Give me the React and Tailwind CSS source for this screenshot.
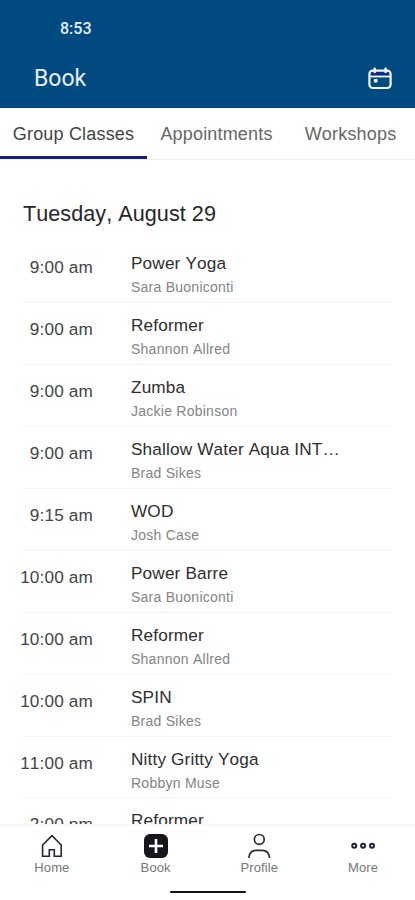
const tabs = [
  { label: "Group Classes", width: "w-[147px]", active: true },
  { label: "Appointments", width: "w-[139px]" },
  { label: "Workshops", width: "w-[129px]" },
];

const classes = [
  { time: "9:00 am", title: "Power Yoga", teacher: "Sara Buoniconti" },
  { time: "9:00 am", title: "Reformer", teacher: "Shannon Allred" },
  { time: "9:00 am", title: "Zumba", teacher: "Jackie Robinson" },
  { time: "9:00 am", title: "Shallow Water Aqua INT…", teacher: "Brad Sikes" },
  { time: "9:15 am", title: "WOD", teacher: "Josh Case" },
  { time: "10:00 am", title: "Power Barre", teacher: "Sara Buoniconti" },
  { time: "10:00 am", title: "Reformer", teacher: "Shannon Allred" },
  { time: "10:00 am", title: "SPIN", teacher: "Brad Sikes" },
  { time: "11:00 am", title: "Nitty Gritty Yoga", teacher: "Robbyn Muse" },
  { time: "2:00 pm", title: "Reformer", teacher: "Shannon Allred" },
];

function CalendarIcon() {
  return (
    <svg width="26" height="24" viewBox="0 0 26 24" fill="none" stroke="#f1f3ff">
      <path d="M4 4.5h17.600v4H4z" fill="#0c2a86" stroke="none" />
      <rect x="2.4" y="3.6" width="21.2" height="17.4" rx="3.4" strokeWidth="2.2" />
      <path d="M2.4 9.5h21.2" strokeWidth="1.8" />
      <path d="M7.7 1.7v3.3M18.6 1.7v3.3" strokeWidth="2.6" strokeLinecap="round" />
      <rect x="6.9" y="12" width="3.6" height="3.6" rx="0.8" fill="#f1f3ff" stroke="none" />
    </svg>
  );
}

function HomeIcon() {
  return (
    <svg width="26" height="26" viewBox="0 0 26 26" fill="none" stroke="#24243c" strokeWidth="1.6">
      <path d="M13 2.6 3.6 12v11.3h6.7v-6.6h5v6.6h6.9V12z" />
    </svg>
  );
}

function BookIcon() {
  return (
    <svg width="26" height="26" viewBox="0 0 26 26">
      <rect x="1" y="1" width="24" height="24" rx="6" fill="#17171b" />
      <path d="M13 6v14M6 13h14" stroke="#fff" strokeWidth="2.6" />
    </svg>
  );
}

function ProfileIcon() {
  return (
    <svg width="26" height="26" viewBox="0 0 26 26" fill="none" stroke="#2c2c38" strokeWidth="1.7">
      <circle cx="13.3" cy="6.4" r="4.9" />
      <path d="M2.7 25c.6-5 3.5-7.7 7.3-7.7h6.4c3.8 0 6.7 2.7 7.3 7.7" />
    </svg>
  );
}

function MoreIcon() {
  return (
    <svg width="26" height="26" viewBox="0 0 26 26" fill="none" stroke="#20203a" strokeWidth="2">
      <circle cx="4.2" cy="12.8" r="2" />
      <circle cx="13.1" cy="12.8" r="2" />
      <circle cx="22" cy="12.8" r="2" />
    </svg>
  );
}

const navItems = [
  { label: "Home", Icon: HomeIcon },
  { label: "Book", Icon: BookIcon },
  { label: "Profile", Icon: ProfileIcon },
  { label: "More", Icon: MoreIcon },
];

function ClassRow({ time, title, teacher }) {
  return (
    <li className="mx-[23px] flex h-[61.93px] shrink-0 border-b border-[#f3f5f6]">
      <div className="-ml-[13px] w-[83px] shrink-0 pt-[15px] text-right text-[17.2px] leading-[22px] tracking-[0.15px] text-[#444]">
        {time}
      </div>
      <div className="ml-[38px] min-w-0 pt-[11px]">
        <div className="whitespace-nowrap text-[17.2px] leading-[22px] tracking-[0.15px] text-[#2e2e2e]">{title}</div>
        <div className="mt-[4px] whitespace-nowrap text-[14px] leading-[18px] tracking-[0.25px] text-[#848484]">
          {teacher}
        </div>
      </div>
    </li>
  );
}

export default function App() {
  return (
    <div className="flex h-[900px] w-[415px] flex-col overflow-hidden bg-white font-['Liberation_Sans',Arial,sans-serif] [font-kerning:none]">
      <header className="flex h-[108px] shrink-0 flex-col border-b border-[#073c83] bg-[#004a82] font-[Roboto,sans-serif] text-[#e9efff]">
        <div className="pl-[60px] pt-[19px] text-[16px] font-medium leading-[20px]">8:53</div>
        <div className="mt-[25px] flex items-center justify-between pl-[34px] pr-[22px]">
          <h1 className="text-[23px] leading-[30px]">Book</h1>
          <CalendarIcon />
        </div>
      </header>

      <nav className="flex h-[52px] shrink-0 border-b border-[#f0f1f3]">
        {tabs.map((tab) => (
          <div
            key={tab.label}
            className={`${tab.width} h-[51px] whitespace-nowrap pt-[15px] text-center text-[18px] leading-[22px] tracking-[0.18px] ${
              tab.active ? "border-b-[3px] border-[#1c1c78] text-[#444]" : "text-[#666]"
            }`}
          >
            {tab.label}
          </div>
        ))}
      </nav>

      <main className="flex min-h-0 flex-1 flex-col overflow-hidden">
        <h2 className="shrink-0 pb-[13.2px] pl-[23px] pt-[40px] text-[21.6px] leading-[28px] tracking-[0.05px] text-[#262626]">
          Tuesday, August 29
        </h2>
        <ul className="flex flex-col">
          {classes.map((item, i) => (
            <ClassRow key={i} {...item} />
          ))}
        </ul>
      </main>

      <footer className="h-[76px] shrink-0 border-t-2 border-[#f7f7f8] bg-white">
        <div className="grid grid-cols-4">
          {navItems.map(({ label, Icon }) => (
            <div key={label} className="flex flex-col items-center pt-[7px]">
              <Icon />
              <span className="mt-[1px] text-[13px] leading-[16px] tracking-[0.1px] text-[#777]">{label}</span>
            </div>
          ))}
        </div>
        <div className="mx-auto mt-[15px] h-[2px] w-[76px] rounded-full bg-[#151515]" />
      </footer>
    </div>
  );
}
